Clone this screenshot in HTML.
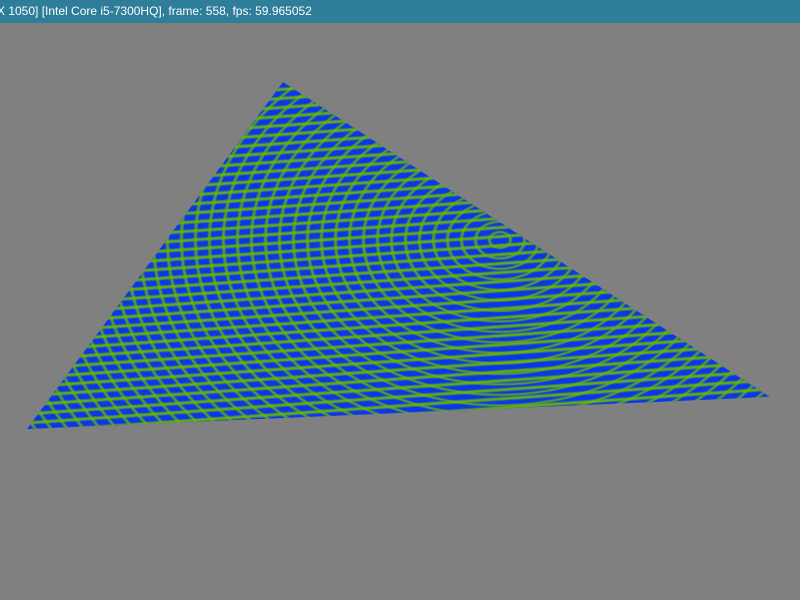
<!DOCTYPE html>
<html><head><meta charset="utf-8"><style>
html,body{margin:0;padding:0;width:800px;height:600px;overflow:hidden;background:#808080;font-family:"Liberation Sans",sans-serif}
.bar{position:absolute;left:0;top:0;width:800px;height:23px;background:#2e7e99;color:#fff;font-size:12px;line-height:23px;white-space:nowrap}
.bar span{position:absolute;left:-3px}
.tri{position:absolute;left:0;top:0;width:800px;height:600px;
clip-path:polygon(283px 82px,770px 397px,27px 429px);
background:
repeating-radial-gradient(ellipse 100% 100% at 500px 240px, rgba(110,190,0,0) 0 8px, rgba(108,184,0,.75) 10px 11px, rgba(110,190,0,0) 13px 14px),
repeating-linear-gradient(-4deg, rgba(110,190,0,0) 0 3px, rgba(108,184,0,.9) 5px 6px, rgba(110,190,0,0) 8px 9px),
#0a38e8;}
</style></head><body>
<div class="bar"><span>X 1050] [Intel Core i5-7300HQ], frame: 558, fps: 59.965052</span></div>
<div class="tri"></div>
</body></html>
